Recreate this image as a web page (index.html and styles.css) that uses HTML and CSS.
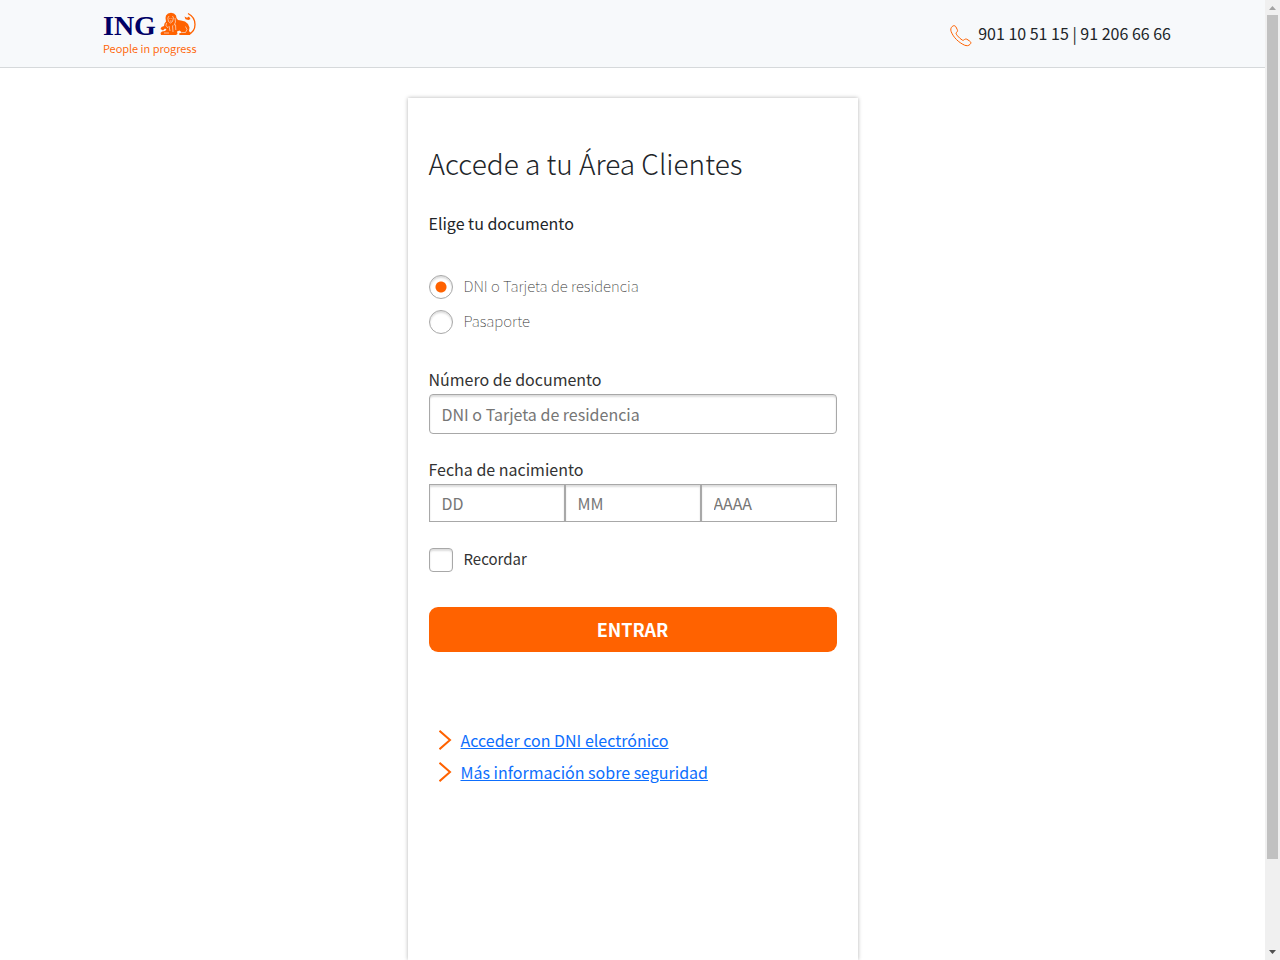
FILE: index.html
```html
<!DOCTYPE html>
<html lang="es">
<head>
<meta charset="utf-8">
<meta name="viewport" content="width=device-width, initial-scale=1">
<title>Accede a tu Área Clientes</title>
<link rel="stylesheet" href="styles.css">
</head>
<body>
<div class="page">
  <header class="header">
    <div class="brand">
      <div class="brand-top">
        <span class="brand-name">ING</span>
        <svg class="lion" viewBox="0 0 36 24" width="36" height="24" aria-hidden="true">
          <path fill="#ff6200" d="M5.500 6 6 3.500 8 1.500 11 .8 14 1.500 16 3.500 16.500 6 18 8 21 8.500 25 9.500 28 12 29.500 15.500 29 19 30.500 21 30 23H19.500L19 21.500 22 20.500 19.500 18.500 17 19.500 17.500 22 16 23H1L.5 21 2 19.500 5 19 6.500 17.500 5 16.500 3 18.500.5 17 1.500 15 4 14 4.500 11.500 6 9.500z"/>
          <path d="M28 22.500C32.500 21 35 17 35 12.500 35 8 33 4 28 1.500" fill="none" stroke="#ff6200" stroke-width="1.300"/>
          <path d="M24.500 4.500 27 5.800 29 4.500 30.500 7 28.500 8 25.500 7.300z" fill="#ff6200"/>
          <path fill="none" stroke="#f7f9fb" stroke-width=".6" d="M9 4 7.800 6 8.500 9.500 10.500 11 12.500 9.500 13.500 6 12.500 4M9.500 6.500h.8M11.500 6.500h.8M10 9h1.500M6.500 11 6 13.500 8 16M15 6 15.500 10 14 13.500M9 14l1 5M12.500 13.500 13 20M15.500 12.500 15.800 18M4 21h5M25.500 14.500 27 17.500 25.500 20.500H22"/>
        </svg>
      </div>
      <span class="tagline">People in progress</span>
    </div>
    <div class="phone">
      <svg viewBox="0 0 22 22" width="22" height="22" fill="none" stroke="#ff6200" stroke-width="1" stroke-linejoin="round" aria-hidden="true">
        <path d="M2.200 1.500C3.500.3 5 .5 5.800 1.700L7.300 4.700C8 6 7.300 6.800 6.400 7.500 5.500 8.200 6.500 9.500 7.500 10.800 9 12.600 10.500 14 12.300 15.100 13.300 15.600 13.800 15.100 14.500 14.500 15.300 13.900 16.200 13.900 17 14.300L19.700 16.100C21.100 17.100 21.200 18.100 20.200 19.200 18.600 21 16.600 21 14.400 20.100 8.500 17.300 3.500 12.500 1.200 6.700.4 4.500.7 3 2.200 1.500z"/>
      </svg>
      <span>901 10 51 15 | 91 206 66 66</span>
    </div>
  </header>
  <main class="main">
    <form class="card">
      <h1 class="title">Accede a tu Área Clientes</h1>
      <fieldset class="documents">
        <legend class="legend">Elige tu documento</legend>
        <label class="choice"><input class="radio" type="radio" name="doc" checked><span>DNI o Tarjeta de residencia</span></label>
        <label class="choice"><input class="radio" type="radio" name="doc"><span>Pasaporte</span></label>
      </fieldset>
      <div class="field">
        <label class="label" for="number">Número de documento</label>
        <input class="input rounded" id="number" type="text" placeholder="DNI o Tarjeta de residencia">
      </div>
      <div class="field">
        <label class="label" for="day">Fecha de nacimiento</label>
        <div class="date">
          <input class="input" id="day" type="text" placeholder="DD" aria-label="Día">
          <input class="input" type="text" placeholder="MM" aria-label="Mes">
          <input class="input" type="text" placeholder="AAAA" aria-label="Año">
        </div>
      </div>
      <label class="remember"><input class="check" type="checkbox"><span>Recordar</span></label>
      <button class="submit" type="submit">ENTRAR</button>
      <nav class="links">
        <div class="link-row">
          <svg viewBox="0 0 14 20" width="14" height="20" fill="none" stroke="#ff6200" stroke-width="2" aria-hidden="true"><path d="M.5 .8 11 10 .5 19.200"/></svg>
          <a href="#dnie">Acceder con DNI electrónico</a>
        </div>
        <div class="link-row">
          <svg viewBox="0 0 14 20" width="14" height="20" fill="none" stroke="#ff6200" stroke-width="2" aria-hidden="true"><path d="M.5 .8 11 10 .5 19.200"/></svg>
          <a href="#seguridad">Más información sobre seguridad</a>
        </div>
      </nav>
    </form>
  </main>
</div>
<div class="scrollbar" aria-hidden="true">
  <svg viewBox="0 0 15 15" width="15" height="15"><path d="M4 10 7.500 6 11 10z" fill="#a3a3a3"/></svg>
  <div class="track"><div class="thumb"></div><div class="rest"></div></div>
  <svg viewBox="0 0 15 15" width="15" height="15"><path d="M4 5 7.500 9 11 5z" fill="#505050"/></svg>
</div>
</body>
</html>
```
FILE: styles.css
```css
* { box-sizing: border-box; }
body {
  margin: 0;
  height: 100vh;
  display: flex;
  overflow: hidden;
  background: #fff;
  color: #212529;
  font-family: "Noto Sans CJK SC", "Noto Sans", sans-serif;
  font-size: 16px;
  line-height: 24px;
}
.page {
  flex: 1;
  min-width: 0;
  display: flex;
  flex-direction: column;
}
.header {
  display: flex;
  align-items: center;
  justify-content: space-between;
  height: 68px;
  flex: none;
  padding: 0 94px 0 103px;
  background: #f7f9fb;
  border-bottom: 1px solid #d6d9db;
}
.brand-top { display: flex; align-items: flex-end; gap: 4px; }
.brand-name {
  color: #000066;
  font: bold 28px/20px "Liberation Serif", serif;
}
.lion { display: block; }
.tagline {
  display: block;
  padding-top: 4px;
  color: #ff6200;
  font-size: 11px;
  font-weight: 350;
  line-height: 16px;
}
.phone { display: flex; align-items: flex-end; gap: 6px; }
.phone svg { display: block; }
.phone span { padding-bottom: 2px; }
.main {
  flex: 1;
  min-height: 0;
  display: flex;
  justify-content: center;
  padding-top: 30px;
}
.card {
  width: 100%;
  max-width: 450px;
  padding: 41px 21px 0;
  box-shadow: 0 0 4px rgba(0, 0, 0, .3);
}
.title {
  margin: 0 0 24px;
  font-size: 28px;
  font-weight: 300;
  line-height: 48px;
}
.documents { margin: 0 0 28px; padding: 0; border: 0; }
.legend { padding: 0; margin-bottom: 34px; }
.choice, .remember { display: flex; align-items: center; gap: 11px; }
.choice span, .remember span { padding-bottom: 2px; }
.choice {
  height: 35px;
  color: #333;
  font-size: 15px;
  font-weight: 100;
}
.radio, .check {
  appearance: none;
  flex: none;
  width: 24px;
  height: 24px;
  margin: 0;
  border: 1px solid #a8a8a8;
  background: #fff;
  box-shadow: inset 0 2px 2px #ddd;
}
.radio { border-radius: 50%; }
.radio:checked { background: radial-gradient(circle, #ff6200 5px, #fff 6px); }
.check { border-radius: 4px; }
.field { margin-bottom: 23px; color: #333; }
.label { display: block; margin-bottom: 3px; }
.input {
  display: block;
  width: 100%;
  min-width: 0;
  height: 38px;
  padding: 0 12px;
  border: 1px solid #a8a8a8;
  border-radius: 0;
  background: #fff;
  box-shadow: inset 0 2px 2px #ddd;
  color: #333;
  font: inherit;
}
.input::placeholder { color: #767676; }
.rounded { height: 40px; border-radius: 4px; }
.date { display: flex; }
.remember { height: 24px; margin: 26px 0 35px; color: #333; font-size: 15px; }
.submit {
  display: block;
  width: 100%;
  height: 45px;
  padding: 0 0 2px;
  border: 0;
  border-radius: 9px;
  background: #ff6200;
  color: #fff;
  font: inherit;
  font-size: 18px;
  font-weight: 700;
}
.links { padding: 72px 10px 0; }
.link-row { display: flex; align-items: center; gap: 8px; height: 32px; }
.link-row a { color: #0d6efd; }
.scrollbar {
  flex: none;
  width: 15px;
  display: flex;
  flex-direction: column;
  background: #f0f0f0;
}
.scrollbar svg { display: block; }
.track { flex: 1; display: flex; flex-direction: column; padding: 0 2px; }
.thumb { flex: 844; background: #c1c1c1; }
.rest { flex: 86; }
```
